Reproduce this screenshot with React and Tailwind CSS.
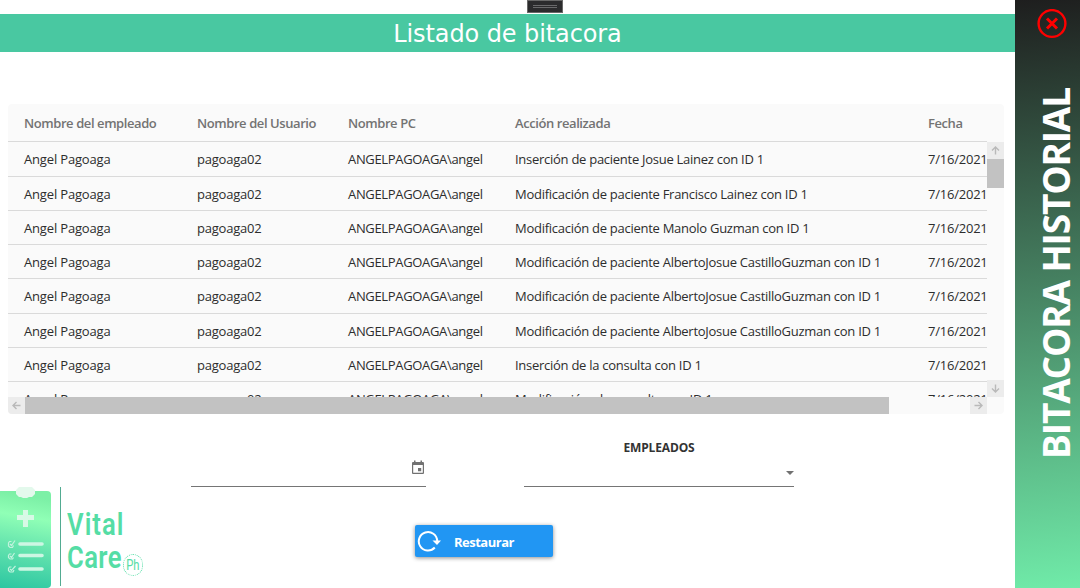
import React from 'react';

const grid = 'grid grid-cols-[173px_151px_167px_413px_1fr] pl-4 whitespace-pre';

const rows = [
  ['h-[35px]', 'Inserción de paciente Josue Lainez con ID 1'],
  ['h-[34px]', 'Modificación de paciente Francisco Lainez con ID 1'],
  ['h-[34px]', 'Modificación de paciente Manolo Guzman con ID 1'],
  ['h-[34px]', 'Modificación de paciente AlbertoJosue CastilloGuzman con ID 1'],
  ['h-[35px]', 'Modificación de paciente AlbertoJosue CastilloGuzman con ID 1'],
  ['h-[34px]', 'Modificación de paciente AlbertoJosue CastilloGuzman con ID 1'],
  ['h-[34px]', 'Inserción de la consulta con ID 1'],
  ['h-[34px]', 'Modificación  de consulta con ID 1'],
];

function ScrollButton({ turn }) {
  return (
    <div className="flex size-[17px] shrink-0 items-center justify-center bg-[#ececec]">
      <svg viewBox="0 0 9 9" className={`size-[9px] ${turn}`} fill="none" stroke="#b9b9b9" strokeWidth="1.4">
        <path d="M4.5 8.5V1M1 4.5 4.5 1 8 4.5" />
      </svg>
    </div>
  );
}

function Table() {
  return (
    <div className="ml-2 mt-[52px] h-[310px] w-[996px] overflow-hidden rounded-[4px] bg-[#fafafa] text-[13px]">
      <div className={`${grid} h-[38px] w-[979px] items-center border-b border-[#dadada] pt-[2px] font-semibold tracking-[-0.42px] text-[#737373]`}>
        <span>Nombre del empleado</span>
        <span>Nombre del Usuario</span>
        <span>Nombre PC</span>
        <span>Acción realizada</span>
        <span>Fecha</span>
      </div>
      <div className="flex h-[255px]">
        <div className="w-[979px] overflow-hidden text-[#2d2d2d]">
          {rows.map(([height, action], i) => (
            <div key={i} className={`${grid} ${height} items-center border-b border-[#dadada] pt-[2px]`}>
              <span className="tracking-[-0.16px]">Angel Pagoaga</span>
              <span className="tracking-[-0.22px]">pagoaga02</span>
              <span className="tracking-[-0.33px]">ANGELPAGOAGA\angel</span>
              <span className="tracking-[-0.27px]">{action}</span>
              <span className="tracking-[-0.22px]">7/16/2021</span>
            </div>
          ))}
        </div>
        <div className="flex w-[17px] flex-col">
          <ScrollButton turn="rotate-0" />
          <div className="h-[29px] bg-[#c2c2c2]" />
          <div className="flex-1" />
          <ScrollButton turn="rotate-180" />
        </div>
      </div>
      <div className="flex h-[17px] w-[979px]">
        <ScrollButton turn="-rotate-90" />
        <div className="w-[864px] bg-[#c2c2c2]" />
        <div className="flex-1" />
        <ScrollButton turn="rotate-90" />
      </div>
    </div>
  );
}

function Logo() {
  return (
    <div className="flex h-[101px] w-[150px] items-start">
      <svg viewBox="0 0 62 101" className="h-[101px] w-[62px] shrink-0">
        <defs>
          <linearGradient id="board" x1="0.1" y1="0" x2="0" y2="1">
            <stop offset="0" stopColor="#7cf0a6" />
            <stop offset="0.22" stopColor="#90ffb6" />
            <stop offset="0.55" stopColor="#64e3ae" />
            <stop offset="1" stopColor="#2bc6a1" />
          </linearGradient>
        </defs>
        <rect x="-4" y="4" width="55" height="97" rx="4" fill="url(#board)" />
        <path d="M19 0h13l3 3v4l-3 3h-3l-2 1h-4l-2-1h-2l-3-3V3z" fill="#e3f9ec" />
        <path d="M23 23h5v5h6v5h-6v7h-5v-7h-6v-5h6z" fill="#d8f9e6" />
        <g stroke="#cdf6e3" strokeWidth="3.6" strokeLinecap="round">
          <path d="M20 57H42M20 68.500H42M20 82H42" />
        </g>
        <g stroke="#c2f3de" strokeWidth="1.2" fill="none">
          <path d="M11.500 54.500H9.500l-1 1.500v3l1.500 1.500h2.500l1-2M10 57l1.500 1.500L15 53.500M11.500 67H9.500l-1 1.500v2l1.500 1.500h2.500l1-1.500M10 69l1.500 1.500L14.500 66M11.500 80H9.500l-1 1.500v2L10 85h3l1-2M10 82l1.500 1.500L15.500 79" />
        </g>
        <path d="M60.500 0V99" stroke="#52ab91" />
      </svg>
      <div className="ml-[5px] mt-[21px] font-['Roboto',sans-serif] text-[32px] font-semibold leading-[33px] text-[#55dda5]">
        <div className="w-20 origin-left scale-x-[0.8] tracking-[1.3px]">Vital</div>
        <div className="flex">
          <div className="w-[56px]">
            <div className="origin-left scale-x-[0.8] tracking-[0.5px]">Care</div>
          </div>
          <div className="mt-[13px] flex h-[22px] w-[20px] shrink-0 items-center justify-center rounded-full border border-dotted border-[#55dda5] text-[15px] font-normal leading-none">
            <span className="scale-x-[0.75]">Ph</span>
          </div>
        </div>
      </div>
    </div>
  );
}

export default function App() {
  return (
    <div className="flex h-[588px] w-[1080px] overflow-hidden bg-white font-['Open_Sans','Noto_Sans',sans-serif]">
      <main className="flex w-[1015px] flex-col">
        <div className="flex h-[14px] shrink-0 justify-center pl-[75px]">
          <div className="flex h-[13px] w-[36px] flex-col items-center justify-center gap-px border border-[#686868] bg-[#2b2b2d]">
            <div className="h-px w-6 bg-[#69696b]" />
            <div className="h-px w-6 bg-[#69696b]" />
          </div>
        </div>
        <h1 className="flex h-[38px] shrink-0 items-center justify-center bg-[#49c8a1] pt-[2px] font-['DejaVu_Sans',sans-serif] text-[24px] tracking-[-0.1px] text-white">
          Listado de bitacora
        </h1>
        <Table />
        <div className="flex h-[73px] shrink-0 pl-[191px]">
          <div className="flex w-[235px] justify-end border-b border-[#757575] pt-[46px]">
            <svg viewBox="0 0 12 14" className="mr-[2px] h-[14px] w-[12px]">
              <path fillRule="evenodd" fill="#717171" d="M2 .5h1.500V2h5V.5H10V2h.7c.8 0 1.300.5 1.300 1.300v9.400c0 .8-.5 1.300-1.300 1.300H1.300C.5 14 0 13.500 0 12.700V3.300C0 2.500.5 2 1.300 2H2zM1.200 5v7.800h9.600V5zM6 8h3.200v3.200H6z" />
            </svg>
          </div>
          <div className="ml-[98px] flex w-[270px] flex-col border-b border-[#757575]">
            <div className="mt-[25px] text-center text-[12px] font-bold leading-[18px] tracking-[-0.15px] text-[#333]">EMPLEADOS</div>
            <svg viewBox="0 0 8 4" className="mt-[14px] h-[4px] w-[8px] self-end">
              <path d="M0 0h8L4 4z" fill="#717171" />
            </svg>
          </div>
        </div>
        <div className="flex flex-1 items-start">
          <Logo />
          <button className="ml-[265px] mt-[38px] flex h-[32px] w-[138px] items-center rounded-[2px] bg-[#2196f3] pl-[2px] text-[13px] font-bold text-white shadow-[0_1px_4px_rgba(0,0,0,0.45)]">
            <svg viewBox="0 0 24 22" className="h-[22px] w-[24px]">
              <path d="M17.800 17.500A9.200 9.200 0 1 1 20.200 11" fill="none" stroke="white" strokeWidth="2" />
              <path d="M15.500 10.500h8.500L20 15z" fill="white" />
            </svg>
            <span className="ml-[13px] pt-[3px] tracking-[-0.5px]">Restaurar</span>
          </button>
        </div>
      </main>
      <aside className="flex w-[65px] flex-col items-center bg-[linear-gradient(174deg,#1e1e1e_0%,#70eba9_100%)] pl-[9px]">
        <svg viewBox="0 0 30 30" className="mt-[9px] size-[30px] shrink-0" fill="none" stroke="#ff0000">
          <circle cx="15" cy="14.500" r="13.400" strokeWidth="2.400" />
          <path d="m10 9.500 10 10m0-10-10 10" strokeWidth="3" />
        </svg>
        <div className="mt-[47px] flex h-[374px] w-[50px] items-center justify-center pl-[8px]">
          <div className="rotate-180 whitespace-nowrap text-[37px] font-bold leading-[50px] tracking-[-1.15px] text-white [writing-mode:vertical-rl]">
            BITACORA HISTORIAL
          </div>
        </div>
      </aside>
    </div>
  );
}
